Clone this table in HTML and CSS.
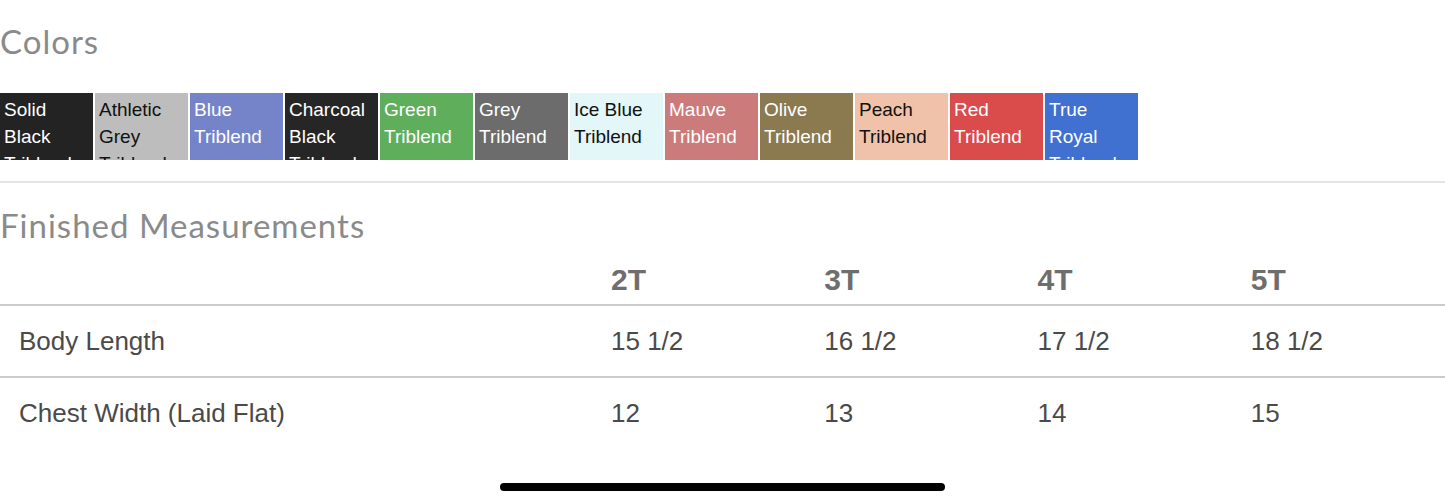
FILE: index.html
```html
<!DOCTYPE html>
<html lang="en">
<head>
<meta charset="utf-8">
<title>Colors and Measurements</title>
<link rel="stylesheet" href="styles.css">
</head>
<body>
<main class="page">
  <section class="colors">
    <h2 class="heading">Colors</h2>
    <div class="swatches">
      <div class="swatch sw-solid-black">Solid Black Triblend</div>
      <div class="swatch sw-athletic-grey">Athletic Grey Triblend</div>
      <div class="swatch sw-blue">Blue Triblend</div>
      <div class="swatch sw-charcoal">Charcoal Black Triblend</div>
      <div class="swatch sw-green">Green Triblend</div>
      <div class="swatch sw-grey">Grey Triblend</div>
      <div class="swatch sw-ice">Ice Blue Triblend</div>
      <div class="swatch sw-mauve">Mauve Triblend</div>
      <div class="swatch sw-olive">Olive Triblend</div>
      <div class="swatch sw-peach">Peach Triblend</div>
      <div class="swatch sw-red">Red Triblend</div>
      <div class="swatch sw-royal">True Royal Triblend</div>
    </div>
  </section>
  <section class="measurements">
    <h2 class="heading heading-measure">Finished Measurements</h2>
    <table class="size-table">
      <thead>
        <tr>
          <th class="label-col"></th>
          <th>2T</th>
          <th>3T</th>
          <th>4T</th>
          <th>5T</th>
        </tr>
      </thead>
      <tbody>
        <tr>
          <td class="label-col">Body Length</td>
          <td>15 1/2</td>
          <td>16 1/2</td>
          <td>17 1/2</td>
          <td>18 1/2</td>
        </tr>
        <tr>
          <td class="label-col">Chest Width (Laid Flat)</td>
          <td>12</td>
          <td>13</td>
          <td>14</td>
          <td>15</td>
        </tr>
      </tbody>
    </table>
  </section>
  <div class="home-indicator"></div>
</main>
</body>
</html>
```

FILE: styles.css
```css
html, body {
  margin: 0;
  padding: 0;
  background: #ffffff;
}

.page {
  width: 1445px;
  height: 502px;
  overflow: hidden;
  position: relative;
}

.heading {
  margin: 0;
  font-family: Lato, "Noto Sans", sans-serif;
  font-weight: 400;
  font-size: 33px;
  letter-spacing: 1px;
  color: #8a8a8a;
  line-height: 40px;
}

.colors {
  padding-top: 21px;
  border-bottom: 2px solid #e3e3e3;
  padding-bottom: 21px;
}

.swatches {
  display: flex;
  gap: 2px;
  margin-top: 32px;
}

.swatch {
  width: 93px;
  height: 67px;
  box-sizing: border-box;
  padding: 3px 2px 0 4px;
  overflow: hidden;
  font-family: "Liberation Sans", Arial, sans-serif;
  font-size: 19px;
  line-height: 27px;
  color: #ffffff;
}

.sw-solid-black { background: #232323; }
.sw-athletic-grey { background: #bdbdbd; color: #111111; }
.sw-blue { background: #7584c9; }
.sw-charcoal { background: #262626; }
.sw-green { background: #5fae5c; }
.sw-grey { background: #6c6c6c; }
.sw-ice { background: #e3f6f8; color: #111111; }
.sw-mauve { background: #cb7b7a; }
.sw-olive { background: #8b7a4f; }
.sw-peach { background: #f1c2aa; color: #111111; }
.sw-red { background: #da4b4c; }
.sw-royal { background: #4070d0; }

.measurements {
  padding-top: 22px;
}

.size-table {
  width: 1445px;
  border-collapse: collapse;
  table-layout: fixed;
  font-family: "Liberation Sans", Arial, sans-serif;
}

.size-table th,
.size-table td {
  box-sizing: border-box;
  text-align: left;
  padding: 0 19px;
  vertical-align: middle;
}

.size-table .label-col {
  width: 592px;
}

.size-table th {
  font-size: 30px;
  font-weight: 700;
  color: #6e6e6e;
  height: 60px;
  padding-top: 11px;
  border-bottom: 2px solid #cccccc;
}

.size-table td {
  font-size: 26px;
  color: #4a4a4a;
  height: 72px;
}

.size-table tbody tr:first-child td {
  border-bottom: 2px solid #cccccc;
}

.home-indicator {
  position: absolute;
  left: 500px;
  top: 483px;
  width: 445px;
  height: 8px;
  border-radius: 4px;
  background: #000000;
}
```
